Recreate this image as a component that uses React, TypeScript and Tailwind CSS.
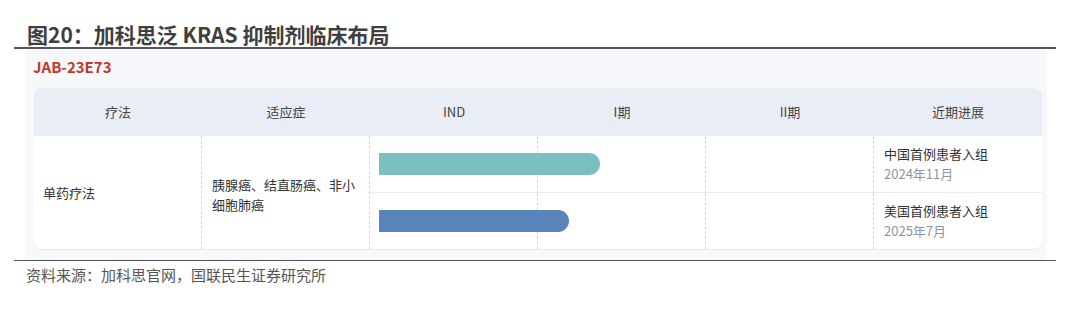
const rows = [
  { bar: "bg-[#7bbfbf]", width: "w-[221px]", title: "中国首例患者入组", date: "2024年11月" },
  { bar: "bg-[#5984b9]", width: "w-[190px]", title: "美国首例患者入组", date: "2025年7月" },
];

const headers = ["疗法", "适应症", "IND", "I期", "II期", "近期进展"];

export default function App() {
  return (
    <div
      className="w-[1070px] h-[318px] bg-white text-[#333]"
      style={{ fontFamily: '"Noto Sans CJK SC", "Noto Sans", sans-serif' }}
    >
      {/* Title */}
      <div className="h-[47px] pt-[22px] pl-[27px] text-[21px] leading-[24px] font-bold text-[#3f3f3f]">
        图20：加科思泛 KRAS 抑制剂临床布局
      </div>

      <div className="mx-[14px] border-t-2 border-b border-[#555]">
        <div className="ml-[11px] mr-[9px] bg-[#f6f8fc] pt-[8px] pb-[11px]">
          <div className="pl-[8px] text-[15px] leading-[20px] font-bold text-[#c0392b]">JAB-23E73</div>

          {/* Table */}
          <div className="mt-[11px] ml-[9px] mr-[5px] rounded-[8px] overflow-hidden bg-white shadow-[0_1px_0_#e4e9f1]">
            <div className="grid grid-cols-6 h-[48px] bg-[#e9eef6] text-[13px] text-[#444]">
              {headers.map((h) => (
                <div key={h} className="flex items-center justify-center">
                  {h}
                </div>
              ))}
            </div>

            <div className="grid grid-cols-6 grid-rows-[57px_56px] text-[13px]">
              <div className="row-span-2 flex items-center px-[9px] border-r border-dashed border-[#d3d8e0]">
                单药疗法
              </div>
              <div className="row-span-2 flex items-center pl-[10px] pr-[8px] pt-[4px] leading-[20px] border-r border-dashed border-[#d3d8e0]">
                胰腺癌、结直肠癌、非小细胞肺癌
              </div>
              {rows.map((r, i) => {
                const sep = i === 0 ? "border-b [border-bottom-style:solid] border-b-[#e8edf4]" : "";
                return (
                  <div key={r.title} className="contents">
                    <div className={`flex items-center pl-[9px] border-r border-dashed border-[#d3d8e0] ${sep}`}>
                      <div className={`relative z-10 h-[22px] shrink-0 ${r.width} ${r.bar} rounded-l-[1px] rounded-r-full`} />
                    </div>
                    <div className={`border-r border-dashed border-[#d3d8e0] ${sep}`} />
                    <div className={`border-r border-dashed border-[#d3d8e0] ${sep}`} />
                    <div className={`flex flex-col justify-center pl-[10px] leading-[20px] ${sep}`}>
                      <div className="text-[#333]">{r.title}</div>
                      <div className="text-[#8a95a7]">{r.date}</div>
                    </div>
                  </div>
                );
              })}
            </div>
          </div>
        </div>
      </div>

      <div className="pl-[26px] pt-[4px] text-[15px] leading-[20px] text-[#555]">
        资料来源：加科思官网，国联民生证券研究所
      </div>
    </div>
  );
}
